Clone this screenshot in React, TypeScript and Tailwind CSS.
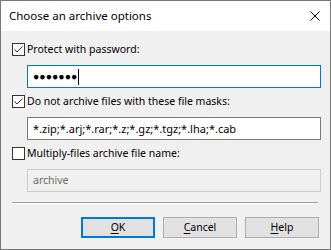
const FONT = 'font-["Noto_Sans",sans-serif]';

function CheckBox({ checked }: { checked: boolean }) {
  return (
    <span className="w-[13px] h-[13px] shrink-0 border border-[#333333] bg-white flex items-center justify-center">
      {checked && (
        <svg width="11" height="11" viewBox="0 0 11 11" fill="none" stroke="#333333" strokeWidth="1">
          <path d="M1.5 5.5 L4 8 L9.5 2.5" />
        </svg>
      )}
    </span>
  );
}

function Option({ label, checked }: { label: string; checked: boolean }) {
  return (
    <div className="flex items-center gap-[2px] h-[13px]">
      <CheckBox checked={checked} />
      <span className="text-[10.5px] leading-none text-black whitespace-nowrap">{label}</span>
    </div>
  );
}

function Btn({ label, hot, def }: { label: string; hot: string; def?: boolean }) {
  const rest = label.slice(1);
  return (
    <button
      className={
        'w-[74px] h-[21px] bg-[#e1e1e1] text-[10.5px] leading-none text-black flex items-center justify-center ' +
        (def ? 'border-2 border-[#0078d7]' : 'border border-[#adadad]')
      }
    >
      <span className="underline underline-offset-2">{hot}</span>
      {rest}
    </button>
  );
}

export default function App() {
  return (
    <div className={`w-[331px] h-[250px] border border-[#777777] bg-[#f0f0f0] flex flex-col ${FONT}`}>
      <div className="h-[30px] bg-white flex items-center justify-between pl-[8px] pr-[10px] shrink-0">
        <span className="text-[11.5px] text-black">Choose an archive options</span>
        <svg width="10" height="10" viewBox="0 0 10 10" stroke="#000000" strokeWidth="1" fill="none">
          <path d="M0.5 0.5 L9.5 9.5 M9.5 0.5 L0.5 9.5" />
        </svg>
      </div>

      <div className="flex flex-col pl-[11px] pt-[12px]">
        <Option label="Protect with password:" checked />
        <div className="ml-[15px] mt-[9px] w-[294px] h-[23px] bg-white border border-[#0078d7] flex items-center pl-[5px]">
          <span className="text-[10.5px] leading-none text-black">●●●●●●●</span>
          <span className="w-px h-[16px] bg-black ml-[1px]" />
        </div>

        <div className="mt-[7px]">
          <Option label="Do not archive files with these file masks:" checked />
        </div>
        <div className="ml-[15px] mt-[9px] w-[294px] h-[23px] bg-white border border-[#7a7a7a] flex items-center pl-[5px]">
          <span className="text-[11px] leading-none text-black">*.zip;*.arj;*.rar;*.z;*.gz;*.tgz;*.lha;*.cab</span>
        </div>

        <div className="mt-[7px]">
          <Option label="Multiply-files archive file name:" checked={false} />
        </div>
        <div className="ml-[15px] mt-[9px] w-[294px] h-[23px] bg-[#f0f0f0] border border-[#cccccc] flex items-center pl-[5px]">
          <span className="text-[10.5px] leading-none text-[#6d6d6d]">archive</span>
        </div>

        <div className="mt-[10px] w-[306px] border-t border-[#a0a0a0] border-b border-b-white" />

        <div className="mt-[13px] w-[307px] flex justify-end gap-[8px]">
          <Btn label="OK" hot="O" def />
          <Btn label="Cancel" hot="C" />
          <Btn label="Help" hot="H" />
        </div>
      </div>
    </div>
  );
}
